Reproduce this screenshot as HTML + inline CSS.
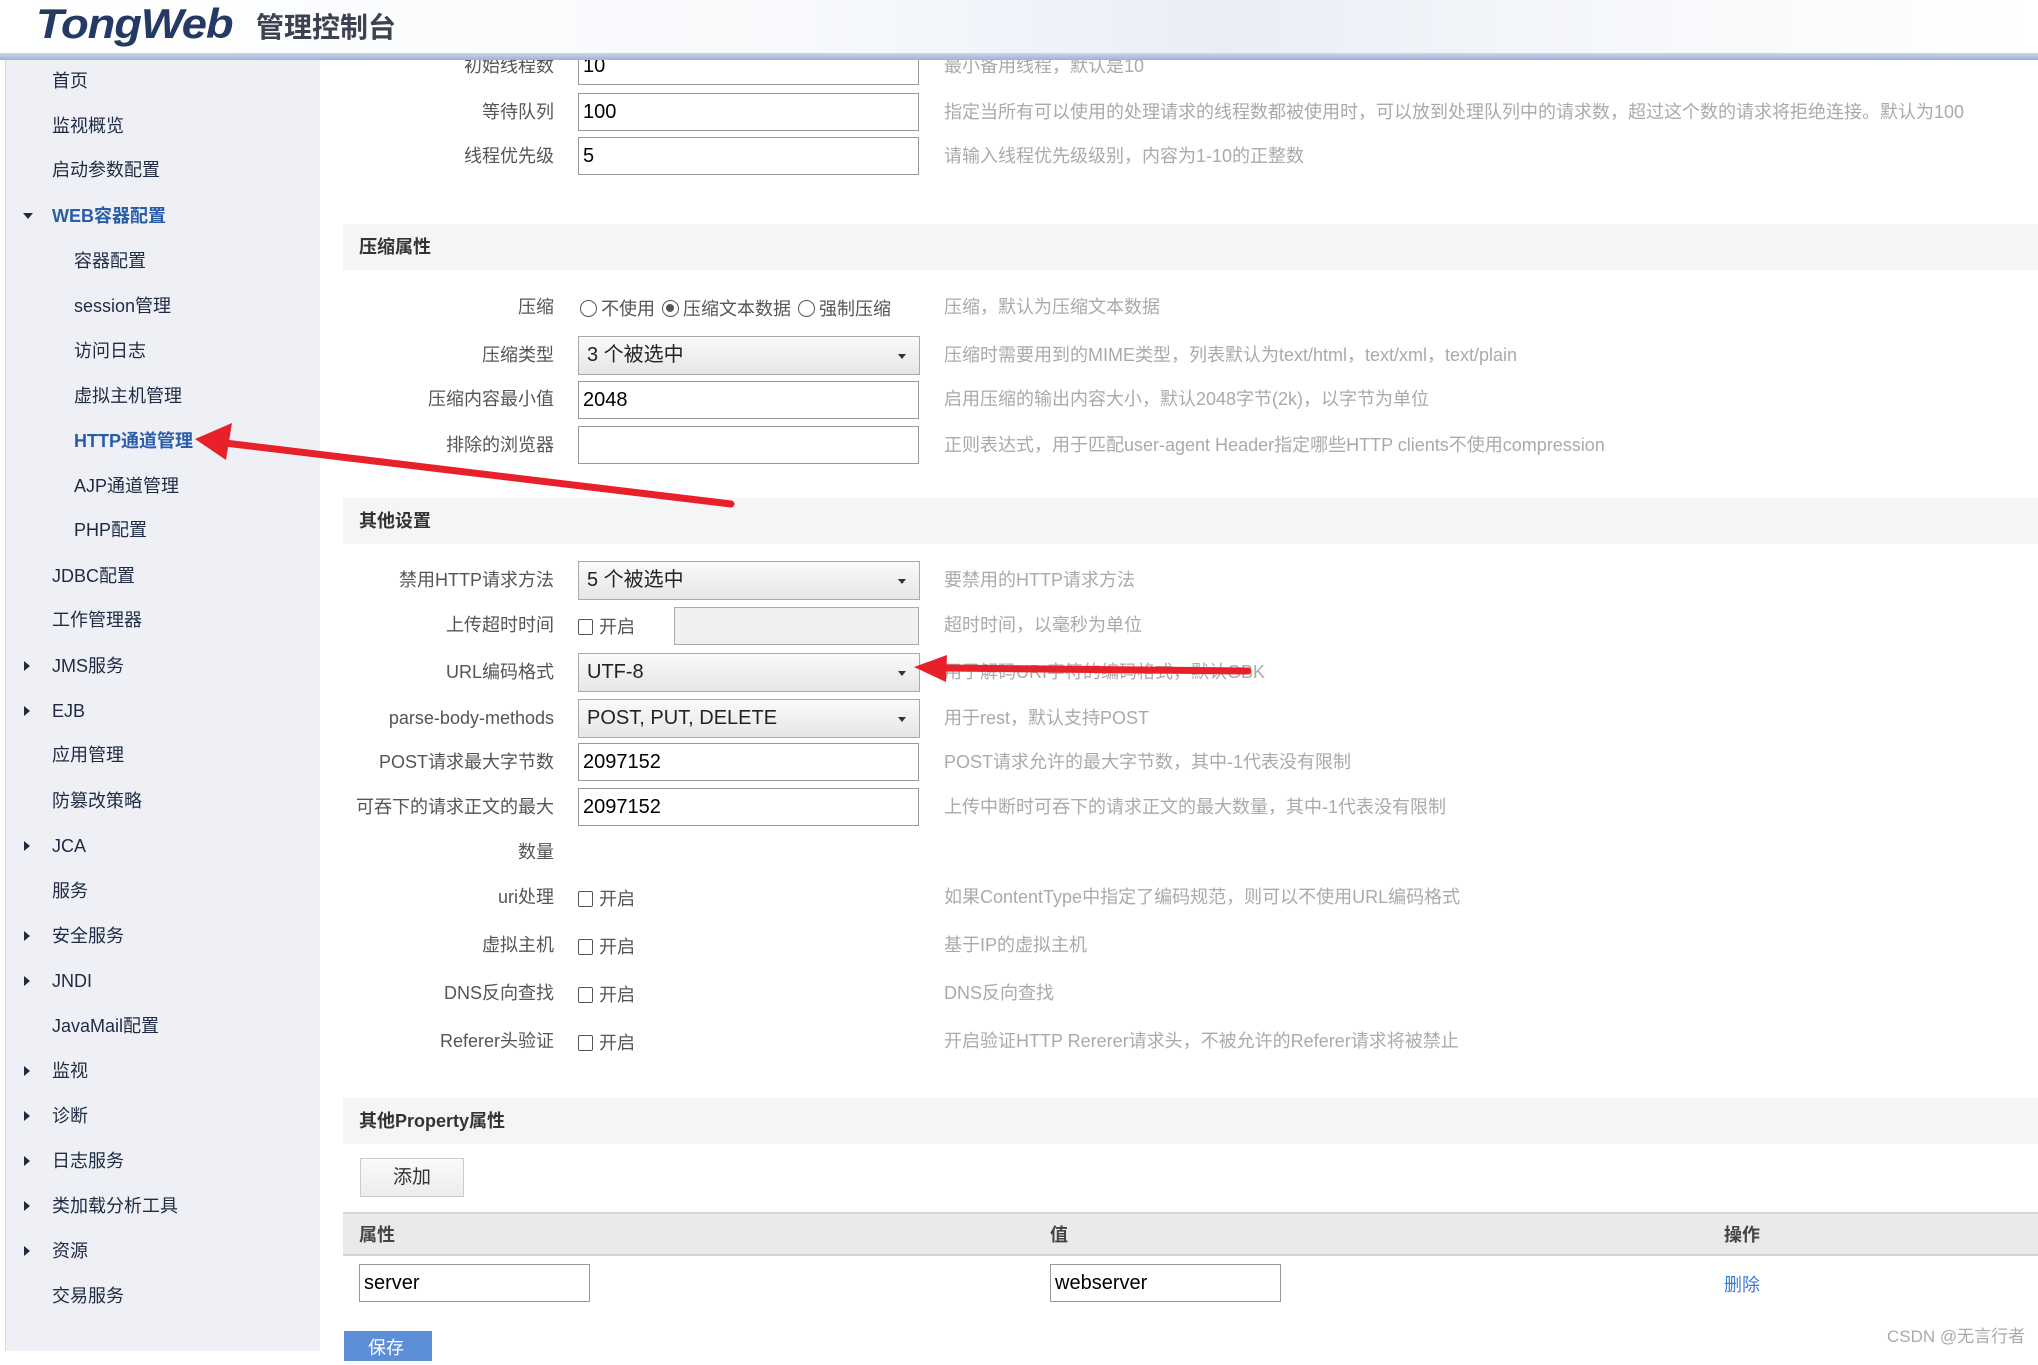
<!DOCTYPE html>
<html><head><meta charset="utf-8">
<style>
*{margin:0;padding:0;box-sizing:border-box}
body{width:2038px;height:1351px;overflow:hidden;background:#fff;position:relative;font-family:"Liberation Sans","Noto Sans CJK SC",sans-serif;font-size:18px;color:#333}
.a{position:absolute;white-space:nowrap}
#hdr{position:absolute;left:0;top:0;width:2038px;height:53px;background:linear-gradient(90deg,#fff 0%,#f7f9fc 40%,#e9eef6 60%,#f6f8fb 80%,#fff 100%);z-index:5}
#band{position:absolute;left:0;top:53px;width:2038px;height:7px;background:linear-gradient(#c9d6ea,#9cb3d6);z-index:5}
#side{position:absolute;left:5px;top:60px;width:315px;height:1291px;background:#eef0f6;border-left:1px solid #d9dbe0}
.si{position:absolute;font-size:18px;color:#1e2b42;line-height:24px}
.tri{position:absolute;left:24px;width:0;height:0;border-top:5px solid transparent;border-bottom:5px solid transparent;border-left:6px solid #1e2b42}
.lbl{position:absolute;left:343px;width:211px;text-align:right;color:#555;line-height:24px}
.in{position:absolute;left:578px;width:341px;height:38px;border:1px solid #999;background:#fff;font-size:20px;color:#000;padding-left:4px;line-height:36px}
.sel{position:absolute;left:578px;width:342px;height:39px;border:1px solid #aaa;background:linear-gradient(#fafafa,#e6e6e6);font-size:20px;color:#222;padding-left:8px;line-height:37px}
.sel:after{content:"";position:absolute;right:13px;top:17px;border-left:4px solid transparent;border-right:4px solid transparent;border-top:5px solid #333}
.ds{position:absolute;left:944px;color:#aaa;line-height:24px}
.sec{position:absolute;left:343px;width:1695px;height:46px;background:#f4f5f7;font-weight:bold;color:#333;padding-left:16px;line-height:46px}
.rad{display:inline-block;width:17px;height:17px;border:1.5px solid #555;border-radius:50%;vertical-align:-2px;margin:0 4px 0 2px;position:relative;background:#fff}
.rad.on:after{content:"";position:absolute;left:3px;top:3px;width:8px;height:8px;border-radius:50%;background:#555}
.cb{display:inline-block;width:15px;height:16px;border:1.5px solid #555;border-radius:2px;vertical-align:-2px;margin-right:6px;background:#fff}
.op{position:absolute;left:578px;color:#555;line-height:24px}
</style></head><body>
<div id="hdr">
 <div class="a" style="left:36px;top:0px;font-size:42px;font-weight:bold;font-style:italic;color:#243a64;letter-spacing:-1px;font-family:'Liberation Sans',sans-serif;transform:scaleX(1.08);transform-origin:left">TongWeb</div>
 <div class="a" style="left:256px;top:6px;font-size:28px;font-weight:bold;color:#3c4250">管理控制台</div>
</div>
<div id="band"></div>
<div id="side"></div>
<div class="si" style="left:52px;top:69px">首页</div>
<div class="si" style="left:52px;top:114px">监视概览</div>
<div class="si" style="left:52px;top:158px">启动参数配置</div>
<div class="a" style="left:23px;top:213px;border-left:5px solid transparent;border-right:5px solid transparent;border-top:6px solid #1e2b42"></div>
<div class="si" style="left:52px;top:204px;color:#2a5ca8;font-weight:bold">WEB容器配置</div>
<div class="si" style="left:74px;top:249px">容器配置</div>
<div class="si" style="left:74px;top:294px">session管理</div>
<div class="si" style="left:74px;top:339px">访问日志</div>
<div class="si" style="left:74px;top:384px">虚拟主机管理</div>
<div class="si" style="left:74px;top:429px;color:#2a5ca8;font-weight:bold">HTTP通道管理</div>
<div class="si" style="left:74px;top:474px">AJP通道管理</div>
<div class="si" style="left:74px;top:518px">PHP配置</div>
<div class="si" style="left:52px;top:564px">JDBC配置</div>
<div class="si" style="left:52px;top:608px">工作管理器</div>
<div class="tri" style="top:661px"></div><div class="si" style="left:52px;top:654px">JMS服务</div>
<div class="tri" style="top:706px"></div><div class="si" style="left:52px;top:699px">EJB</div>
<div class="si" style="left:52px;top:743px">应用管理</div>
<div class="si" style="left:52px;top:789px">防篡改策略</div>
<div class="tri" style="top:841px"></div><div class="si" style="left:52px;top:834px">JCA</div>
<div class="si" style="left:52px;top:879px">服务</div>
<div class="tri" style="top:931px"></div><div class="si" style="left:52px;top:924px">安全服务</div>
<div class="tri" style="top:976px"></div><div class="si" style="left:52px;top:969px">JNDI</div>
<div class="si" style="left:52px;top:1014px">JavaMail配置</div>
<div class="tri" style="top:1066px"></div><div class="si" style="left:52px;top:1059px">监视</div>
<div class="tri" style="top:1111px"></div><div class="si" style="left:52px;top:1104px">诊断</div>
<div class="tri" style="top:1156px"></div><div class="si" style="left:52px;top:1149px">日志服务</div>
<div class="tri" style="top:1201px"></div><div class="si" style="left:52px;top:1194px">类加载分析工具</div>
<div class="tri" style="top:1246px"></div><div class="si" style="left:52px;top:1239px">资源</div>
<div class="si" style="left:52px;top:1284px">交易服务</div>

<div class="lbl" style="top:54px">初始线程数</div><div class="in" style="top:47px">10</div><div class="ds" style="top:54px">最小备用线程，默认是10</div>
<div class="lbl" style="top:100px">等待队列</div><div class="in" style="top:93px">100</div><div class="ds" style="top:100px">指定当所有可以使用的处理请求的线程数都被使用时，可以放到处理队列中的请求数，超过这个数的请求将拒绝连接。默认为100</div>
<div class="lbl" style="top:144px">线程优先级</div><div class="in" style="top:137px">5</div><div class="ds" style="top:144px">请输入线程优先级级别，内容为1-10的正整数</div>

<div class="sec" style="top:224px">压缩属性</div>
<div class="lbl" style="top:295px">压缩</div>
<div class="op" style="top:297px"><span class="rad"></span>不使用 <span class="rad on"></span>压缩文本数据 <span class="rad"></span>强制压缩</div>
<div class="ds" style="top:295px">压缩，默认为压缩文本数据</div>
<div class="lbl" style="top:343px">压缩类型</div><div class="sel" style="top:336px">3 个被选中</div><div class="ds" style="top:343px">压缩时需要用到的MIME类型，列表默认为text/html，text/xml，text/plain</div>
<div class="lbl" style="top:387px">压缩内容最小值</div><div class="in" style="top:381px">2048</div><div class="ds" style="top:387px">启用压缩的输出内容大小，默认2048字节(2k)，以字节为单位</div>
<div class="lbl" style="top:433px">排除的浏览器</div><div class="in" style="top:426px"></div><div class="ds" style="top:433px">正则表达式，用于匹配user-agent Header指定哪些HTTP clients不使用compression</div>

<div class="sec" style="top:498px">其他设置</div>
<div class="lbl" style="top:568px">禁用HTTP请求方法</div><div class="sel" style="top:561px">5 个被选中</div><div class="ds" style="top:568px">要禁用的HTTP请求方法</div>
<div class="lbl" style="top:613px">上传超时时间</div><div class="op" style="top:615px"><span class="cb"></span>开启</div>
<div class="a" style="left:674px;top:607px;width:245px;height:38px;border:1px solid #aaa;background:#f0f0f0"></div><div class="ds" style="top:613px">超时时间，以毫秒为单位</div>
<div class="lbl" style="top:660px">URL编码格式</div><div class="sel" style="top:653px">UTF-8</div><div class="ds" style="top:660px">用于解码URI字符的编码格式，默认GBK</div>
<div class="lbl" style="top:706px">parse-body-methods</div><div class="sel" style="top:699px">POST, PUT, DELETE</div><div class="ds" style="top:706px">用于rest，默认支持POST</div>
<div class="lbl" style="top:750px">POST请求最大字节数</div><div class="in" style="top:743px">2097152</div><div class="ds" style="top:750px">POST请求允许的最大字节数，其中-1代表没有限制</div>
<div class="lbl" style="top:795px">可吞下的请求正文的最大</div><div class="in" style="top:788px">2097152</div><div class="ds" style="top:795px">上传中断时可吞下的请求正文的最大数量，其中-1代表没有限制</div>
<div class="lbl" style="top:840px">数量</div>
<div class="lbl" style="top:885px">uri处理</div><div class="op" style="top:887px"><span class="cb"></span>开启</div><div class="ds" style="top:885px">如果ContentType中指定了编码规范，则可以不使用URL编码格式</div>
<div class="lbl" style="top:933px">虚拟主机</div><div class="op" style="top:935px"><span class="cb"></span>开启</div><div class="ds" style="top:933px">基于IP的虚拟主机</div>
<div class="lbl" style="top:981px">DNS反向查找</div><div class="op" style="top:983px"><span class="cb"></span>开启</div><div class="ds" style="top:981px">DNS反向查找</div>
<div class="lbl" style="top:1029px">Referer头验证</div><div class="op" style="top:1031px"><span class="cb"></span>开启</div><div class="ds" style="top:1029px">开启验证HTTP Rererer请求头，不被允许的Referer请求将被禁止</div>

<div class="sec" style="top:1098px">其他Property属性</div>
<div class="a" style="left:360px;top:1158px;width:104px;height:39px;border:1px solid #ccc;background:linear-gradient(#fafafa,#ececec);text-align:center;line-height:37px;font-size:19px;color:#333">添加</div>
<div class="a" style="left:343px;top:1212px;width:1695px;height:44px;background:#e9eaeb;border-top:2px solid #d4d4d4;border-bottom:2px solid #d4d4d4"></div>
<div class="a" style="left:359px;top:1221px;font-weight:bold;color:#444">属性</div>
<div class="a" style="left:1050px;top:1221px;font-weight:bold;color:#444">值</div>
<div class="a" style="left:1724px;top:1221px;font-weight:bold;color:#444">操作</div>
<div class="in" style="left:359px;top:1264px;width:231px">server</div>
<div class="in" style="left:1050px;top:1264px;width:231px">webserver</div>
<div class="a" style="left:1724px;top:1271px;color:#3a7bd5">删除</div>
<div class="a" style="left:344px;top:1331px;width:88px;height:30px;background:#5b8ed6;color:#fff;padding-left:24px;line-height:34px">保存</div>
<div class="a" style="left:1887px;top:1322px;color:#aaa;font-size:17px">CSDN @无言行者</div>

<svg class="a" style="left:0;top:0;z-index:10" width="2038" height="1351">
 <line x1="731" y1="504" x2="225" y2="443" stroke="#e8202a" stroke-width="7" stroke-linecap="round"/>
 <polygon points="195,439 232,423 226,460" fill="#e8202a"/>
 <line x1="1248" y1="671" x2="945" y2="668" stroke="#e8202a" stroke-width="7" stroke-linecap="round"/>
 <polygon points="914,667 947,655 946,682" fill="#e8202a"/>
</svg>
</body></html>
